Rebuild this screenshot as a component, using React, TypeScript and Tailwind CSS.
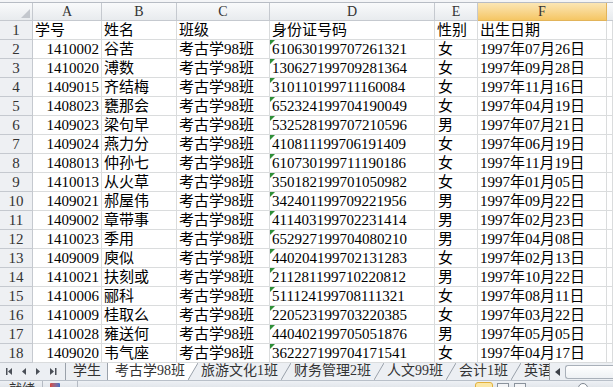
import React from 'react';

const COLS = 'grid grid-cols-[33px_69px_75px_93px_165px_43px_129px_1fr]';

const rows: [string, string, string, string, string][] = [
  ['1410002', '谷苦', '610630199707261321', '女', '1997年07月26日'],
  ['1410020', '溥数', '130627199709281364', '女', '1997年09月28日'],
  ['1409015', '齐结梅', '310110199711160084', '女', '1997年11月16日'],
  ['1408023', '甕那会', '652324199704190049', '女', '1997年04月19日'],
  ['1409023', '梁句早', '532528199707210596', '男', '1997年07月21日'],
  ['1409024', '燕力分', '410811199706191409', '女', '1997年06月19日'],
  ['1408013', '仲孙七', '610730199711190186', '女', '1997年11月19日'],
  ['1410013', '从火草', '350182199701050982', '女', '1997年01月05日'],
  ['1409021', '郝屋伟', '342401199709221956', '男', '1997年09月22日'],
  ['1409002', '章带事', '411403199702231414', '男', '1997年02月23日'],
  ['1410023', '季用', '652927199704080210', '男', '1997年04月08日'],
  ['1409009', '庾似', '440204199702131283', '女', '1997年02月13日'],
  ['1410021', '扶刻或', '211281199710220812', '男', '1997年10月22日'],
  ['1410006', '郦科', '511124199708111321', '女', '1997年08月11日'],
  ['1410009', '桂取么', '220523199703220385', '女', '1997年03月22日'],
  ['1410028', '雍送何', '440402199705051876', '男', '1997年05月05日'],
  ['1409020', '韦气座', '362227199704171541', '女', '1997年04月17日'],
];

const tabs = ['学生', '考古学98班', '旅游文化1班', '财务管理2班', '人文99班', '会计1班', '英语'];

const cell = 'h-[19px] leading-[18px] border-r border-b border-[#dadcdd] overflow-hidden whitespace-nowrap';
const rowHead = 'h-[19px] leading-[18px] border-r border-b border-[#c5c9cf] bg-[#eef0f3] text-center text-[#333]';

function GreenMark() {
  return (
    <svg className="absolute left-0 top-0" width="5" height="5" viewBox="0 0 5 5">
      <polygon points="0,0 5,0 0,5" fill="#2f8f38" />
    </svg>
  );
}

function Slant({ active }: { active?: boolean }) {
  return (
    <svg width="10" height="17" viewBox="0 0 10 17" className="shrink-0">
      {active && <polygon points="0,0 10,0 0,17" fill="#ffffff" />}
      <line x1="0" y1="17" x2="10" y2="0" stroke="#9aa1aa" strokeWidth="1" />
    </svg>
  );
}

function NavArrows() {
  return (
    <div className="flex h-full w-[65px] shrink-0 items-center">
      <svg width="65" height="17" viewBox="0 0 65 17">
        <g fill="#4a4f57">
          <rect x="6" y="5" width="1.5" height="7" />
          <polygon points="12,5 12,12 8,8.5" />
          <polygon points="26,5 26,12 22,8.5" />
          <polygon points="36,5 36,12 40,8.5" />
          <polygon points="50,5 50,12 54,8.5" />
          <rect x="55" y="5" width="1.5" height="7" />
        </g>
      </svg>
    </div>
  );
}

export default function App() {
  return (
    <div className="flex h-[387px] w-[613px] flex-col overflow-hidden bg-white font-['Liberation_Serif','Noto_Sans_CJK_SC',serif] text-[15px] text-black">
      {/* formula bar edge */}
      <div className="h-[3px] shrink-0 border-b border-[#b7bcc4] bg-[#f4f5f7]" />

      {/* column headers */}
      <div className={`${COLS} h-[18px] shrink-0 text-[14px] text-[#333]`}>
        <div className="relative border-r border-b border-[#c5c9cf] bg-gradient-to-b from-[#f9fafb] to-[#e8ebee]">
          <svg className="absolute bottom-[2px] right-[2px]" width="9" height="9" viewBox="0 0 9 9">
            <polygon points="9,0 9,9 0,9" fill="#c3c7cd" />
          </svg>
        </div>
        {['A', 'B', 'C', 'D', 'E'].map((c) => (
          <div
            key={c}
            className="border-r border-b border-[#c5c9cf] bg-gradient-to-b from-[#f9fafb] to-[#e8ebee] text-center leading-[17px]"
          >
            {c}
          </div>
        ))}
        <div className="border-r border-b border-[#e2b45a] bg-gradient-to-b from-[#fbe6b4] to-[#f5c663] text-center leading-[17px]">
          F
        </div>
        <div className="border-b border-[#c5c9cf] bg-gradient-to-b from-[#f9fafb] to-[#e8ebee]" />
      </div>

      {/* sheet */}
      <div className="shrink-0">
        <div className={COLS}>
          <div className={rowHead}>1</div>
          <div className={`${cell} pl-[2px]`}>学号</div>
          <div className={`${cell} pl-[2px]`}>姓名</div>
          <div className={`${cell} pl-[2px]`}>班级</div>
          <div className={`${cell} pl-[2px]`}>身份证号码</div>
          <div className={`${cell} pl-[2px]`}>性别</div>
          <div className={`${cell} pl-[2px]`}>出生日期</div>
          <div className={cell} />
        </div>
        {rows.map((r, i) => (
          <div key={r[0] + i} className={COLS}>
            <div className={rowHead}>{i + 2}</div>
            <div className={`${cell} pr-[2px] text-right`}>{r[0]}</div>
            <div className={`${cell} pl-[2px]`}>{r[1]}</div>
            <div className={`${cell} pl-[2px]`}>考古学98班</div>
            <div className={`${cell} relative pl-[2px]`}>
              <GreenMark />
              {r[2]}
            </div>
            <div className={`${cell} pl-[3px]`}>{r[3]}</div>
            <div className={`${cell} pl-[2px]`}>{r[4]}</div>
            <div className={cell} />
          </div>
        ))}
      </div>

      {/* sheet tabs */}
      <div className="flex h-[17px] shrink-0 items-stretch bg-[#eceff3] text-[14px] text-[#333]">
        <NavArrows />
        <div className="flex w-[485px] shrink-0 items-stretch overflow-hidden border-r border-[#9aa1aa]">
          <div className="shrink-0 border-l border-[#9aa1aa] pl-[7px] pr-[6px] leading-[16px]">{tabs[0]}</div>
          <div className="flex shrink-0 items-stretch">
            <div className="border-l border-[#9aa1aa] bg-white pl-[7px] pr-[3px] leading-[16px]">{tabs[1]}</div>
            <Slant active />
          </div>
          {tabs.slice(2).map((t, i) => (
            <div key={t} className="flex shrink-0 items-stretch">
              <div className="px-[3px] leading-[16px]">{t}</div>
              {i < tabs.length - 3 && <Slant />}
            </div>
          ))}
        </div>
        <div className="flex w-[15px] shrink-0 items-center justify-center">
          <svg width="6" height="8" viewBox="0 0 6 8">
            <polygon points="5,0 5,8 0,4" fill="#3c4047" />
          </svg>
        </div>
        <div className="flex flex-1 items-center pr-0">
          <div className="h-[14px] flex-1 rounded-l-[3px] border border-r-0 border-[#a9b0b9] bg-gradient-to-b from-white to-[#eef1f4]" />
        </div>
      </div>

      {/* status bar */}
      <div className="relative h-[7px] shrink-0 overflow-hidden border-t border-[#b9c0c9] bg-gradient-to-b from-[#eef1f5] to-[#e2e6eb]">
        <div className="absolute left-[9px] top-[1px] text-[13px] leading-[13px] text-[#333]">就绪</div>
        <div className="absolute left-[42px] top-0 h-full w-px bg-[#b4bac3]" />
        <div className="absolute left-[50px] top-[2px] h-[8px] w-[10px] rounded-[1px] bg-gradient-to-r from-[#d8433a] to-[#3b6fc9]" />
        <div className="absolute left-[77px] top-0 h-full w-px bg-[#b4bac3]" />
        <div className="absolute left-[475px] top-[1px] h-[10px] w-[18px] rounded-[3px] border border-[#e3b13c] bg-[#fbe7a6]" />
        <div className="absolute left-[497px] top-[2px] h-[8px] w-[12px] border border-[#8a929c] bg-[#f3f4f6]" />
        <div className="absolute left-[514px] top-[2px] h-[8px] w-[12px] border border-[#8a929c] bg-[#f3f4f6]" />
        <div className="absolute left-[578px] top-[2px] h-[10px] w-[10px] rounded-full border border-[#7d8590] bg-white" />
      </div>
    </div>
  );
}
